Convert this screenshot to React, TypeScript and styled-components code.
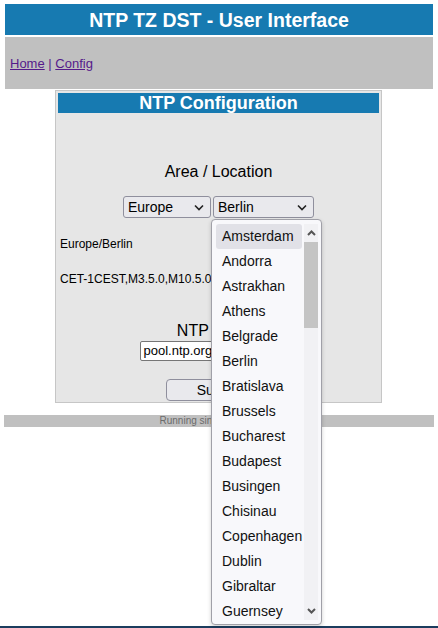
import React from "react";
import styled, { createGlobalStyle } from "styled-components";

const GlobalStyle = createGlobalStyle`
  html, body {
    margin: 0;
    padding: 0;
    background: #ffffff;
    font-family: "Liberation Sans", Arial, sans-serif;
  }
`;

const blue = "#177ab1";

const Page = styled.div`
  min-height: 628px;
  display: flex;
  flex-direction: column;
  position: relative;
`;

const Main = styled.div`
  flex: 1;
  padding-top: 4px;
`;

const Header = styled.h1`
  width: 428px;
  margin: 0 auto;
  height: 31px;
  line-height: 32px;
  background: ${blue};
  color: #ffffff;
  font-size: 19.5px;
  font-weight: bold;
  text-align: center;
`;

const Nav = styled.div`
  width: 428px;
  margin: 2px auto 0;
  height: 52px;
  background: #c0c0c0;
  display: flex;
  align-items: center;
  padding-left: 5px;
  box-sizing: border-box;
  font-size: 13px;
  color: #551a8b;

  a {
    color: #551a8b;
  }
`;

const Card = styled.div`
  width: 327px;
  margin: 1px 0 0 55px;
  box-sizing: border-box;
  background: #e6e6e6;
  border: 1px solid #c6c6c6;
  padding: 2px;
  height: 313px;
`;

const CardTitle = styled.div`
  background: ${blue};
  color: #ffffff;
  font-size: 18px;
  font-weight: bold;
  text-align: center;
  height: 20px;
  line-height: 21px;
`;

const Label = styled.div<{ $top: number }>`
  margin-top: ${(p) => p.$top}px;
  text-align: center;
  font-size: 16px;
  color: #000;
  line-height: 18px;
`;

const SelectRow = styled.div`
  display: flex;
  justify-content: center;
  gap: 2px;
  margin-top: 15px;
`;

const Select = styled.div<{ $w: number }>`
  width: ${(p) => p.$w}px;
  height: 22px;
  box-sizing: border-box;
  border: 1px solid #8f8f9d;
  border-radius: 3px;
  background: #e9e9ed;
  display: flex;
  align-items: center;
  justify-content: space-between;
  padding: 0 6px 0 4px;
  font-size: 14px;
  color: #000;
`;

const Info = styled.div<{ $top: number }>`
  margin-top: ${(p) => p.$top}px;
  padding-left: 2px;
  font-size: 12px;
  color: #000;
  line-height: 14px;
`;

const Input = styled.div`
  width: 158px;
  height: 20px;
  margin: 1px auto 0;
  box-sizing: border-box;
  border: 1px solid #767676;
  border-radius: 2px;
  background: #fff;
  font-size: 13px;
  padding-left: 3px;
  line-height: 18px;
  color: #000;
`;

const Button = styled.div`
  width: 106px;
  height: 22px;
  margin: 18px auto 0;
  box-sizing: border-box;
  border: 1px solid #8f8f9d;
  border-radius: 4px;
  background: #e9e9ed;
  font-size: 14px;
  text-align: center;
  line-height: 20px;
  color: #000;
`;

const Footer = styled.div`
  width: 430px;
  margin: 12px auto 0;
  height: 12px;
  background: #c0c0c0;
  color: #6b6b6b;
  font-size: 10px;
  line-height: 12px;
  text-align: center;
`;

const BottomLine = styled.div`
  height: 2px;
  background: #1b3d5e;
`;

const Popup = styled.div`
  position: absolute;
  left: 211px;
  top: 219px;
  width: 111px;
  height: 406px;
  box-sizing: border-box;
  background: #f8f8fb;
  border: 1px solid #a0a0a8;
  border-radius: 4px;
  box-shadow: 0 2px 4px rgba(0, 0, 0, 0.18);
  display: flex;
  padding: 4px 3px 4px 4px;
`;

const List = styled.div`
  flex: 1;
  display: flex;
  flex-direction: column;
`;

const Option = styled.div<{ $active?: boolean }>`
  height: 25px;
  line-height: 25px;
  padding-left: 6px;
  font-size: 14px;
  color: #111;
  border-radius: 3px;
  background: ${(p) => (p.$active ? "#e1e1e7" : "transparent")};
`;

const Scrollbar = styled.div`
  width: 17px;
  margin-left: 2px;
  background: #f1f1f4;
  display: flex;
  flex-direction: column;
  align-items: center;
`;

const Arrow = styled.div`
  height: 18px;
  display: flex;
  align-items: center;
  justify-content: center;
`;

const Track = styled.div`
  flex: 1;
  width: 100%;
`;

const Thumb = styled.div`
  width: 100%;
  height: 86px;
  background: #c4c4c4;
`;

const Chevron = () => (
  <svg width="10" height="7" viewBox="0 0 10 7">
    <path d="M1 1.5 L5 5.5 L9 1.5" stroke="#222" strokeWidth="1.6" fill="none" />
  </svg>
);

const SmallArrow = ({ up }: { up?: boolean }) => (
  <svg width="9" height="6" viewBox="0 0 9 6">
    <path
      d={up ? "M1 5 L4.5 1.5 L8 5" : "M1 1 L4.5 4.5 L8 1"}
      stroke="#555"
      strokeWidth="2"
      fill="none"
    />
  </svg>
);

const cities = [
  "Amsterdam",
  "Andorra",
  "Astrakhan",
  "Athens",
  "Belgrade",
  "Berlin",
  "Bratislava",
  "Brussels",
  "Bucharest",
  "Budapest",
  "Busingen",
  "Chisinau",
  "Copenhagen",
  "Dublin",
  "Gibraltar",
  "Guernsey",
];

export default function App() {
  return (
    <Page>
      <GlobalStyle />
      <Main>
        <Header>NTP TZ DST - User Interface</Header>
        <Nav>
          <a href="#">Home</a>&nbsp;|&nbsp;<a href="#">Config</a>
        </Nav>
        <Card>
          <CardTitle>NTP Configuration</CardTitle>
          <Label $top={50}>Area / Location</Label>
          <SelectRow>
            <Select $w={88}>
              Europe <Chevron />
            </Select>
            <Select $w={101}>
              Berlin <Chevron />
            </Select>
          </SelectRow>
          <Info $top={19}>Europe/Berlin</Info>
          <Info $top={21}>CET-1CEST,M3.5.0,M10.5.0/3</Info>
          <Label $top={36}>NTP Server</Label>
          <Input>pool.ntp.org</Input>
          <Button>Submit</Button>
        </Card>
        <Footer>Running since 0d 00:12:34</Footer>
      </Main>
      <BottomLine />
      <Popup>
        <List>
          {cities.map((c, i) => (
            <Option key={c} $active={i === 0}>
              {c}
            </Option>
          ))}
        </List>
        <Scrollbar>
          <Arrow>
            <SmallArrow up />
          </Arrow>
          <Track>
            <Thumb />
          </Track>
          <Arrow>
            <SmallArrow />
          </Arrow>
        </Scrollbar>
      </Popup>
    </Page>
  );
}
